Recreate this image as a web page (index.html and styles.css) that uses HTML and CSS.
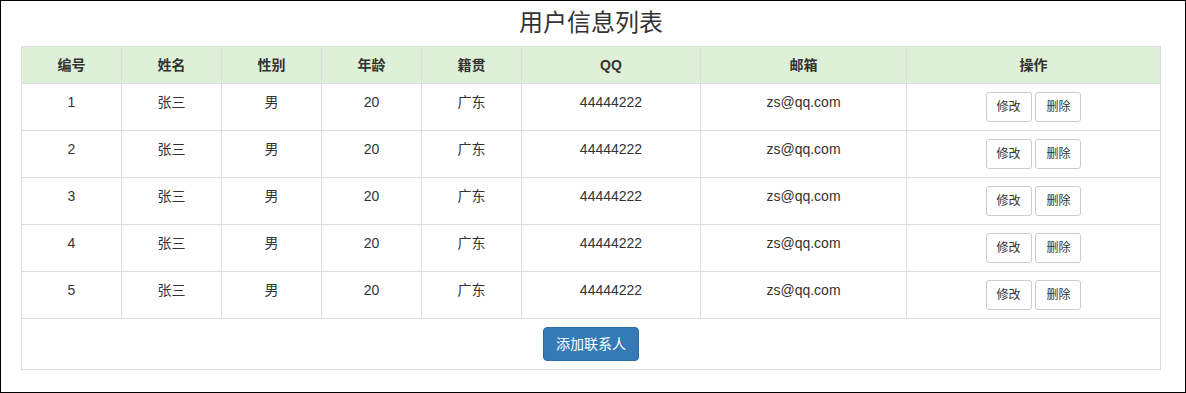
FILE: index.html
```html
<!DOCTYPE html>
<html lang="zh-CN">
<head>
<meta charset="utf-8">
<title>用户信息列表</title>
<link rel="stylesheet" href="styles.css">
</head>
<body>
<div class="page">
  <h3 class="title">用户信息列表</h3>
  <table class="users">
    <colgroup>
      <col class="c-n"><col class="c-n"><col class="c-n"><col class="c-n"><col class="c-n">
      <col class="c-qq"><col class="c-mail"><col class="c-op">
    </colgroup>
    <tr class="head">
      <th>编号</th><th>姓名</th><th>性别</th><th>年龄</th><th>籍贯</th><th>QQ</th><th>邮箱</th><th>操作</th>
    </tr>
    <tr>
      <td>1</td><td>张三</td><td>男</td><td>20</td><td>广东</td><td>44444222</td><td>zs@qq.com</td>
      <td><a class="btn btn-sm">修改</a> <a class="btn btn-sm">删除</a></td>
    </tr>
    <tr>
      <td>2</td><td>张三</td><td>男</td><td>20</td><td>广东</td><td>44444222</td><td>zs@qq.com</td>
      <td><a class="btn btn-sm">修改</a> <a class="btn btn-sm">删除</a></td>
    </tr>
    <tr>
      <td>3</td><td>张三</td><td>男</td><td>20</td><td>广东</td><td>44444222</td><td>zs@qq.com</td>
      <td><a class="btn btn-sm">修改</a> <a class="btn btn-sm">删除</a></td>
    </tr>
    <tr>
      <td>4</td><td>张三</td><td>男</td><td>20</td><td>广东</td><td>44444222</td><td>zs@qq.com</td>
      <td><a class="btn btn-sm">修改</a> <a class="btn btn-sm">删除</a></td>
    </tr>
    <tr>
      <td>5</td><td>张三</td><td>男</td><td>20</td><td>广东</td><td>44444222</td><td>zs@qq.com</td>
      <td><a class="btn btn-sm">修改</a> <a class="btn btn-sm">删除</a></td>
    </tr>
    <tr>
      <td colspan="8"><a class="btn btn-primary">添加联系人</a></td>
    </tr>
  </table>
</div>
</body>
</html>
```

FILE: styles.css
```css
html, body {
  margin: 0;
  padding: 0;
}
body {
  font-family: "Liberation Sans", "Noto Sans CJK SC", sans-serif;
  font-size: 14px;
  line-height: 20px;
  color: #333;
  background: #fff;
}
.page {
  box-sizing: border-box;
  width: 1186px;
  height: 393px;
  border: 1px solid #000;
  padding: 9px 0 0 20px;
}
.title {
  margin: 0 0 10px 0;
  width: 1140px;
  text-align: center;
  font-size: 24px;
  font-weight: 400;
  line-height: 26.4px;
  color: #333;
}
.users {
  border-collapse: collapse;
  table-layout: fixed;
  width: 1140px;
}
.c-n { width: 100px; }
.c-qq { width: 179px; }
.c-mail { width: 206px; }
.users th, .users td {
  border: 1px solid #ddd;
  padding: 8px;
  text-align: center;
  vertical-align: top;
  line-height: 20px;
}
.users th {
  font-weight: bold;
}
.head {
  background: #dff0d8;
}
.btn {
  display: inline-block;
  border: 1px solid #ccc;
  background: #fff;
  color: #333;
  text-decoration: none;
  cursor: pointer;
  vertical-align: middle;
}
.btn-sm {
  padding: 5px 10px;
  font-size: 12px;
  line-height: 18px;
  border-radius: 3px;
}
.btn-primary {
  padding: 6px 12px;
  font-size: 14px;
  line-height: 20px;
  border-radius: 4px;
  background: #337ab7;
  border-color: #2e6da4;
  color: #fff;
}
```
